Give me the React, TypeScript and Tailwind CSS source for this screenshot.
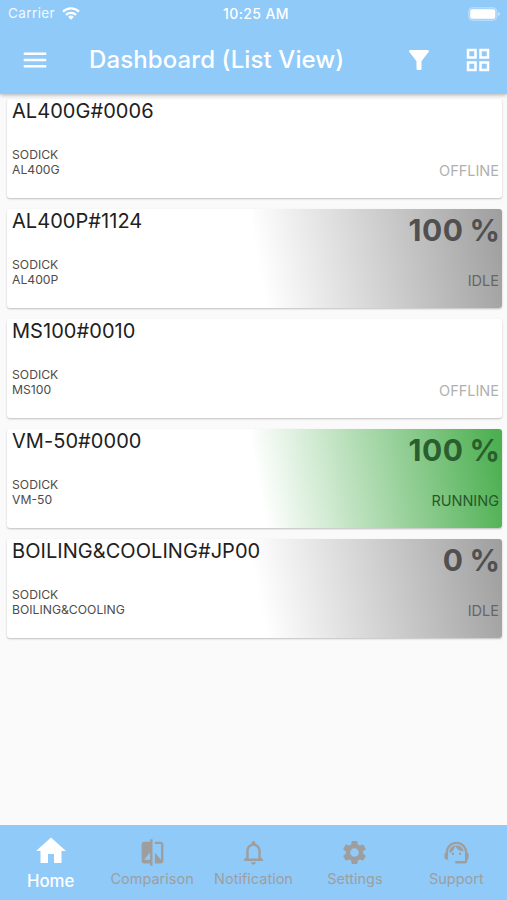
import {
    MdCompare,
    MdFilterAlt,
    MdGridView,
    MdHome,
    MdMenu,
    MdNotificationsNone,
    MdSettings,
    MdSupportAgent
} from 'react-icons/md';

const machines = [
    { name: "AL400G#0006", maker: "SODICK", model: "AL400G", status: "OFFLINE", rate: "" },
    { name: "AL400P#1124", maker: "SODICK", model: "AL400P", status: "IDLE", rate: "100 %" },
    { name: "MS100#0010", maker: "SODICK", model: "MS100", status: "OFFLINE", rate: "" },
    { name: "VM-50#0000", maker: "SODICK", model: "VM-50", status: "RUNNING", rate: "100 %" },
    { name: "BOILING&COOLING#JP00", maker: "SODICK", model: "BOILING&COOLING", status: "IDLE", rate: "0 %" }
];

const statusFill: Record<string, string> = {
    OFFLINE: "text-[#b0b0b0]",
    IDLE: "text-[#666666] bg-[linear-gradient(79deg,#ffffff_5%,#9e9e9e_100%)]",
    RUNNING: "text-[#26582a] bg-[linear-gradient(79deg,#ffffff_5%,#4caf50_98%)]"
};

const rateColor: Record<string, string> = {
    OFFLINE: "",
    IDLE: "text-[#505050]",
    RUNNING: "text-[#2b5e2e]"
};

const tabs = [
    { label: "Comparison", Icon: MdCompare },
    { label: "Notification", Icon: MdNotificationsNone },
    { label: "Settings", Icon: MdSettings },
    { label: "Support", Icon: MdSupportAgent }
];

const StatusBar = () => (
    <div className="grid h-[27px] grid-cols-[1fr_auto_1fr] items-center pl-2 pr-[7px] text-[13.5px] leading-none">
        <div className="flex items-center gap-[7px]">
            <span className="tracking-[0.4px] opacity-90">Carrier</span>
            <svg width="18" height="13" viewBox="0 0 18 13" fill="none" stroke="white" strokeWidth="2.3">
                <path d="M1 4.7a11.5 11.5 0 0 1 16 0" />
                <path d="M4 7.8a7.2 7.2 0 0 1 10 0" />
                <path d="M9 12.7 6.2 9.9a4 4 0 0 1 5.6 0z" fill="white" stroke="none" />
            </svg>
        </div>
        <span className="pl-1 pt-px text-[14px] font-medium tracking-[0.4px]">10:25 AM</span>
        <svg className="justify-self-end" width="32" height="14" viewBox="0 0 32 14">
            <rect x="0.5" y="0.5" width="28.5" height="13" rx="4" fill="white" fillOpacity="0.2" stroke="white" strokeOpacity="0.25" />
            <rect x="2.2" y="2.2" width="25" height="9.6" rx="2" fill="white" />
            <path d="M30.2 5v4q1.6-.6 1.6-2t-1.6-2z" fill="white" fillOpacity="0.6" />
        </svg>
    </div>
);

const MachineCard = ({ machine }: { machine: typeof machines[number] }) => (
    <div className="flex h-[99px] overflow-hidden rounded-[3px] bg-white shadow-[0_1px_2px_rgba(0,0,0,0.24)]">
        <div className="z-10 w-[246px] whitespace-nowrap pl-[5px]">
            <h2 className="text-[20px] leading-[24px] tracking-[0.05px] text-[#212121]">{machine.name}</h2>
            <p className="mt-[24px] text-[12.2px] leading-[15px] text-[#4c4c4c]">{machine.maker}</p>
            <p className="text-[12.2px] leading-[15px] text-[#4c4c4c]">{machine.model}</p>
        </div>
        <div className={`flex flex-1 flex-col items-end pr-[3px] ${statusFill[machine.status]}`}>
            <span className={`-mr-[1.5px] h-[63px] pt-[2px] text-[30px] font-bold leading-[38px] tracking-[0.5px] [word-spacing:-1.5px] ${rateColor[machine.status]}`}>
                {machine.rate}
            </span>
            <span className="text-[14.5px] leading-[18px]">{machine.status}</span>
        </div>
    </div>
);

const App = () => {
    return (
        <div className="flex h-[900px] w-[507px] flex-col overflow-hidden bg-[#fafafa] font-['Inter',sans-serif]">
            <header className="z-10 h-[94px] shrink-0 bg-[#90caf9] text-white shadow-[0_1px_4px_rgba(0,0,0,0.3)]">
                <StatusBar />
                <div className="flex h-[66px] items-center pl-5 pr-[14px]">
                    <MdMenu size={30} />
                    <h1 className="ml-[39px] flex-1 text-[24px] font-medium tracking-[0.1px]">Dashboard (List View)</h1>
                    <MdFilterAlt size={30} />
                    <MdGridView size={30} className="ml-[29px]" />
                </div>
            </header>

            <main className="flex flex-1 flex-col gap-[11px] pl-[7px] pr-[5px] pt-[5px]">
                {machines.map((machine) => (
                    <MachineCard key={machine.name} machine={machine} />
                ))}
            </main>

            <nav className="grid h-[75px] shrink-0 grid-cols-5 bg-[#90caf9] text-[#9e9e9e]">
                <div className="flex flex-col items-center pt-2 text-white">
                    <MdHome size={36} />
                    <span className="mt-[2px] text-[16.8px] font-medium leading-5">Home</span>
                </div>
                {tabs.map(({ label, Icon }) => (
                    <div key={label} className="flex flex-col items-center pt-[13px]">
                        <Icon size={29} />
                        <span className="mt-[3px] text-[14.5px] leading-[18px]">{label}</span>
                    </div>
                ))}
            </nav>
        </div>
    );
};

export default App;
